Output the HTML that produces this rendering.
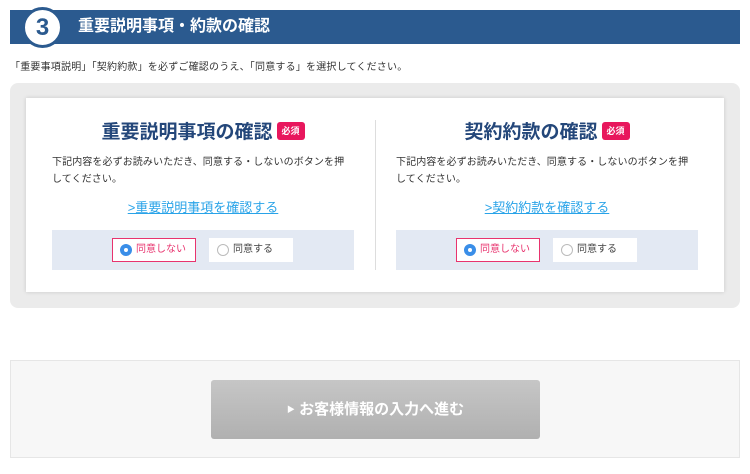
<!DOCTYPE html>
<html><head><meta charset="utf-8"><style>
*{box-sizing:border-box;margin:0;padding:0}
body{width:750px;height:474px;background:#fff;font-family:"Liberation Sans","Noto Sans CJK JP",sans-serif;position:relative;overflow:hidden}
.hd{position:absolute;left:10px;top:10px;width:730px;height:34px;background:#2b5a8f}
.circ{position:absolute;left:22px;top:7px;width:41px;height:41px;border-radius:50%;background:#fff;border:3px solid #2b5a8f;text-align:center;font-weight:bold;font-size:24px;line-height:35px;color:#2b5a8f}
.ht{position:absolute;left:78px;top:17px;color:#fff;font-weight:bold;font-size:16px;line-height:20px}
.ins{position:absolute;left:10px;top:58px;font-size:10px;color:#333;letter-spacing:0.2px}
.outer{position:absolute;left:10px;top:83px;width:730px;height:225px;background:#ebebeb;border-radius:8px}
.card{position:absolute;left:26px;top:98px;width:698px;height:194px;background:#fff;box-shadow:0 0 4px rgba(0,0,0,.15)}
.div{position:absolute;left:375px;top:120px;width:1px;height:150px;background:#ddd}
.col{position:absolute;top:0;width:302px}
.ttl{position:absolute;top:22px;width:100%;text-align:center;font-size:19px;font-weight:bold;color:#24477a;line-height:26px}
.bd{display:inline-block;background:#e8175d;color:#fff;font-size:9px;border-radius:3px;padding:0 5px;line-height:18px;vertical-align:4px;margin-left:4px}
.desc{position:absolute;top:56px;left:0;font-size:10px;line-height:17px;color:#333;white-space:nowrap;letter-spacing:0.1px}
.lk{position:absolute;top:99px;width:100%;text-align:center;font-size:13px;color:#29a3e8;text-decoration:underline}
.bar{position:absolute;top:132px;left:0;width:302px;height:40px;background:#e3e9f3}
.b{position:absolute;top:8px;width:84px;height:24px;background:#fff;font-size:10px;line-height:22px;color:#444;padding-left:23px;border:1px solid #fff}
.b.on{border-color:#e8336e;color:#e8336e}
.b i{position:absolute;left:7px;top:5px;width:12px;height:12px;border-radius:50%;border:1px solid #bbb;background:#fff}
.b.on i{background:#3a8ee8;border-color:#3a8ee8}
.b.on i:after{content:"";position:absolute;left:3px;top:3px;width:4px;height:4px;border-radius:50%;background:#fff}
.bot{position:absolute;left:10px;top:360px;width:730px;height:98px;background:#f7f7f7;border:1px solid #e6e6e6}
.btn{position:absolute;left:211px;top:380px;width:329px;height:59px;border-radius:3px;background:linear-gradient(#c6c6c6,#b0b0b0);color:#fff;font-weight:bold;font-size:15px;text-align:center;line-height:59px}
</style></head><body>
<div class="hd"></div>
<div class="circ">3</div>
<div class="ht">重要説明事項・約款の確認</div>
<div class="ins">「重要事項説明」「契約約款」を必ずご確認のうえ、「同意する」を選択してください。</div>
<div class="outer"></div>
<div class="card"></div>
<div class="div"></div>
<div class="col" style="left:52px;top:98px">
<div class="ttl">重要説明事項の確認<span class="bd">必須</span></div>
<div class="desc">下記内容を必ずお読みいただき、同意する・しないのボタンを押<br>してください。</div>
<div class="lk">&gt;重要説明事項を確認する</div>
<div class="bar"><div class="b on" style="left:60px"><i></i>同意しない</div><div class="b" style="left:157px"><i></i>同意する</div></div>
</div>
<div class="col" style="left:396px;top:98px">
<div class="ttl">契約約款の確認<span class="bd">必須</span></div>
<div class="desc">下記内容を必ずお読みいただき、同意する・しないのボタンを押<br>してください。</div>
<div class="lk">&gt;契約約款を確認する</div>
<div class="bar"><div class="b on" style="left:60px"><i></i>同意しない</div><div class="b" style="left:157px"><i></i>同意する</div></div>
</div>
<div class="bot"></div>
<div class="btn"><span style="font-size:8px;vertical-align:2px">▶</span> お客様情報の入力へ進む</div>
</body></html>
